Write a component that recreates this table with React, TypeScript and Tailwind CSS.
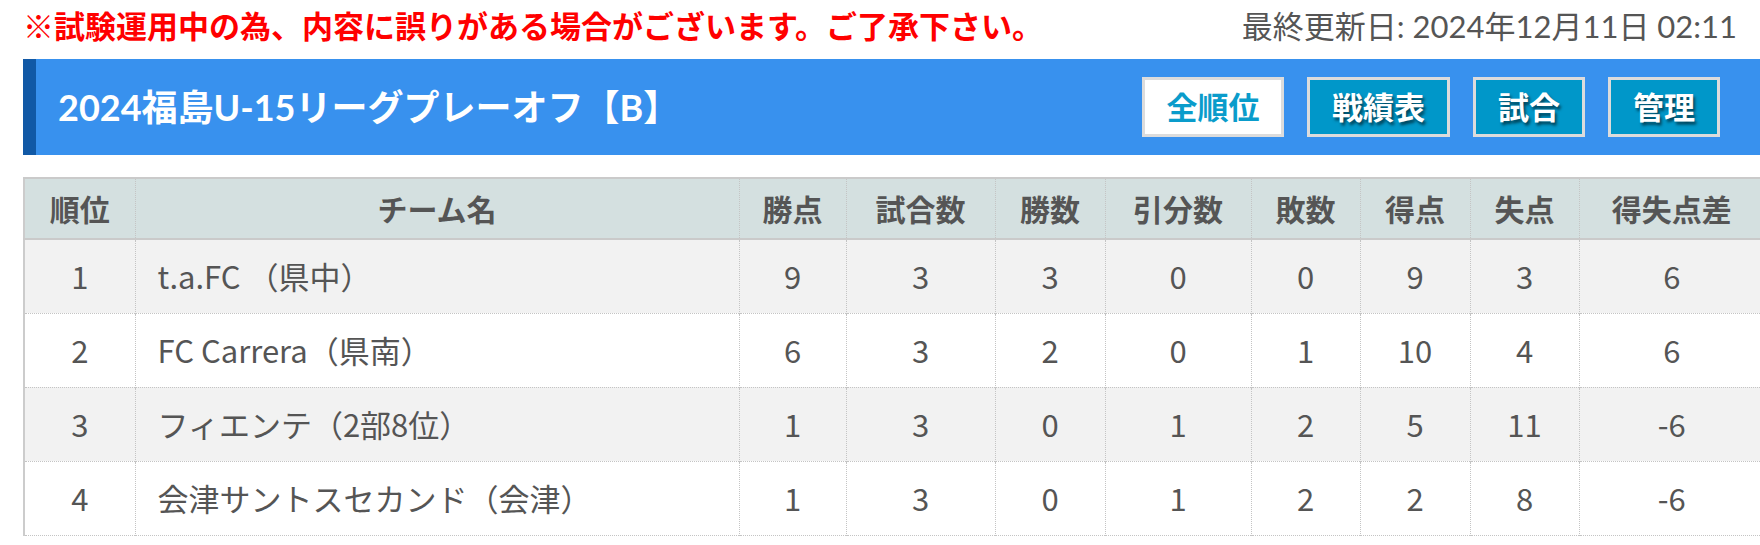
import React from "react";

type Row = {
    rank: number;
    team: string;
    pts: number;
    played: number;
    won: number;
    drawn: number;
    lost: number;
    gf: number;
    ga: number;
    gd: number;
};

const rows: Row[] = [
    { rank: 1, team: "t.a.FC （県中）", pts: 9, played: 3, won: 3, drawn: 0, lost: 0, gf: 9, ga: 3, gd: 6 },
    { rank: 2, team: "FC Carrera（県南）", pts: 6, played: 3, won: 2, drawn: 0, lost: 1, gf: 10, ga: 4, gd: 6 },
    { rank: 3, team: "フィエンテ（2部8位）", pts: 1, played: 3, won: 0, drawn: 1, lost: 2, gf: 5, ga: 11, gd: -6 },
    { rank: 4, team: "会津サントスセカンド（会津）", pts: 1, played: 3, won: 0, drawn: 1, lost: 2, gf: 2, ga: 8, gd: -6 },
];

const heads = ["順位", "チーム名", "勝点", "試合数", "勝数", "引分数", "敗数", "得点", "失点", "得失点差"];
const widths = ["w-[111px]", "w-[604px]", "w-[107px]", "w-[149px]", "w-[110px]", "w-[146px]", "w-[109px]", "w-[110px]", "w-[109px]", "w-[185px]"];

const navBtn = "h-[60px] flex items-center justify-center border-[3px] border-[#dcdcdc] text-[31px] font-bold";
const shadow = "[text-shadow:2px_3px_3px_rgba(0,0,0,0.55)]";

export default function App() {
    return (
        <div className="w-[1760px] h-[545px] overflow-hidden bg-white font-['Lato','Noto_Sans_CJK_JP',sans-serif]">
            {/* notice + last update */}
            <div className="h-[52px] px-[23px] flex items-center justify-between">
                <p className="text-[31px] font-bold text-[#ff0000] leading-none">※試験運用中の為、内容に誤りがある場合がございます。ご了承下さい。</p>
                <p className="text-[31px] text-[#555] leading-none">最終更新日: 2024年12月11日 02:11</p>
            </div>

            <div className="pl-[23px] mt-[7px] w-[1763px]">
                {/* league title bar */}
                <div className="h-[96px] border-l-[13px] border-[#1159a6] bg-[#3891ee] flex items-center justify-between pl-[22px] pr-[43px]">
                    <h1 className="text-[36px] font-bold text-white">2024福島U-15リーグプレーオフ【B】</h1>
                    <div className="flex gap-[23px]">
                        <button className={`${navBtn} bg-white text-[#0a9ccb] w-[142px]`}>全順位</button>
                        <button className={`${navBtn} bg-[#0097c9] text-white w-[143px] ${shadow}`}>戦績表</button>
                        <button className={`${navBtn} bg-[#0097c9] text-white w-[112px] ${shadow}`}>試合</button>
                        <button className={`${navBtn} bg-[#0097c9] text-white w-[112px] ${shadow}`}>管理</button>
                    </div>
                </div>

                {/* standings */}
                <table className="mt-[22px] w-[1740px] table-fixed border-collapse border-l-2 border-l-[#cccccc] text-[#555] font-['Noto_Sans_CJK_JP',sans-serif]">
                    <colgroup>
                        {widths.map((w, i) => <col key={i} className={w} />)}
                    </colgroup>
                    <thead>
                        <tr className="h-[61px] bg-[#d4e0e0] border-y-2 border-y-[#cacaca]">
                            {heads.map((h, i) => (
                                <th key={h} className={`text-[30px] font-bold text-center ${i > 0 ? "border-l border-dotted border-l-[#c4c4c4]" : ""}`}>{h}</th>
                            ))}
                        </tr>
                    </thead>
                    <tbody>
                        {rows.map((r, idx) => (
                            <tr key={r.rank} className={`h-[74px] border-b border-dotted border-b-[#c4c4c4] ${idx % 2 === 0 ? "bg-[#f2f2f2]" : "bg-white"}`}>
                                <td className="text-[31px] text-center">{r.rank}</td>
                                <td className="text-[31px] pl-[22px] border-l border-dotted border-l-[#c4c4c4] whitespace-pre">{r.team}</td>
                                {[r.pts, r.played, r.won, r.drawn, r.lost, r.gf, r.ga, r.gd].map((v, j) => (
                                    <td key={j} className="text-[31px] text-center border-l border-dotted border-l-[#c4c4c4]">{v}</td>
                                ))}
                            </tr>
                        ))}
                    </tbody>
                </table>
            </div>
        </div>
    );
}
